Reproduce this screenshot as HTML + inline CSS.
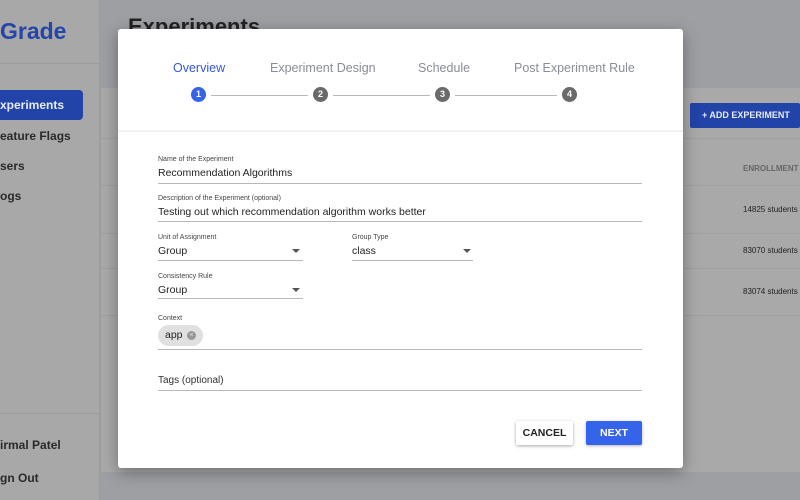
<!DOCTYPE html>
<html><head><style>
*{margin:0;padding:0;box-sizing:border-box}
body{width:800px;height:500px;overflow:hidden;background:#9e9fa3;font-family:"Liberation Sans",sans-serif;position:relative}
.abs{position:absolute}
.side{left:0;top:0;width:100px;height:500px;background:#a8a8a9;border-right:1px solid #9c9c9e}
.nav{font-size:12px;color:#2a2a2a;font-weight:bold;white-space:nowrap}
.card{left:101px;top:88px;width:699px;height:384px;background:#a9a9aa}
.modal{left:118px;top:29px;width:565px;height:439px;background:#fff;border-radius:3px;box-shadow:0 4px 16px rgba(0,0,0,.35)}
.lbl{font-size:7px;color:#444}
.val{font-size:10.5px;color:#222}
.line{height:1px;background:#b8b8b8}
.circ{width:15px;height:15px;border-radius:50%;background:#6a6a6a;color:#fff;font-size:9px;font-weight:bold;text-align:center;line-height:15px}
.step{font-size:12.5px;color:#8a8d99}
.arrow{width:0;height:0;border-left:4px solid transparent;border-right:4px solid transparent;border-top:4px solid #555}
</style></head><body>
<div class="abs side">
 <div class="abs" style="left:0;top:18px;font-size:23px;font-weight:bold;color:#2346a8">Grade</div>
 <div class="abs" style="left:0;top:63px;width:100px;height:1px;background:#9c9c9e"></div>
 <div class="abs" style="left:-10px;top:90px;width:93px;height:30px;background:#2244a8;border-radius:4px"></div>
 <div class="abs nav" style="left:0;top:98px;color:#e8ecff">xperiments</div>
 <div class="abs nav" style="left:0;top:129px">eature Flags</div>
 <div class="abs nav" style="left:0;top:159px">sers</div>
 <div class="abs nav" style="left:0;top:189px">ogs</div>
 <div class="abs" style="left:0;top:413px;width:100px;height:1px;background:#9c9c9e"></div>
 <div class="abs nav" style="left:0;top:438px">irmal Patel</div>
 <div class="abs nav" style="left:0;top:471px">gn Out</div>
</div>
<div class="abs" style="left:128px;top:14px;font-size:22px;font-weight:bold;color:#222">Experiments</div>
<div class="abs card">
 <div class="abs" style="left:589px;top:15px;width:110px;height:25px;background:#2244a8;border-radius:2px;color:#e8ecff;font-size:9px;font-weight:bold;line-height:25px;padding-left:12px">+ ADD EXPERIMENT</div>
 <div class="abs" style="left:0;top:50px;width:699px;height:1px;background:#a0a0a0"></div>
 <div class="abs" style="left:642px;top:76px;font-size:8px;color:#666;font-weight:bold">ENROLLMENT</div>
 <div class="abs" style="left:0;top:97px;width:699px;height:1px;background:#a0a0a0"></div>
 <div class="abs" style="left:642px;top:117px;font-size:8px;color:#222">14825 students</div>
 <div class="abs" style="left:0;top:145px;width:699px;height:1px;background:#a0a0a0"></div>
 <div class="abs" style="left:642px;top:158px;font-size:8px;color:#222">83070 students</div>
 <div class="abs" style="left:0;top:180px;width:699px;height:1px;background:#a0a0a0"></div>
 <div class="abs" style="left:642px;top:199px;font-size:8px;color:#222">83074 students</div>
 <div class="abs" style="left:0;top:227px;width:699px;height:1px;background:#a0a0a0"></div>
</div>
<div class="abs modal">
 <div class="abs step" style="left:55px;top:32px;color:#3858d6">Overview</div>
 <div class="abs step" style="left:152px;top:32px">Experiment Design</div>
 <div class="abs step" style="left:300px;top:32px">Schedule</div>
 <div class="abs step" style="left:396px;top:32px">Post Experiment Rule</div>
 <div class="abs circ" style="left:73px;top:58px;background:#3563e9">1</div>
 <div class="abs line" style="left:93px;top:66px;width:97px"></div>
 <div class="abs circ" style="left:195px;top:58px">2</div>
 <div class="abs line" style="left:215px;top:66px;width:97px"></div>
 <div class="abs circ" style="left:317px;top:58px">3</div>
 <div class="abs line" style="left:337px;top:66px;width:102px"></div>
 <div class="abs circ" style="left:444px;top:58px">4</div>
 <div class="abs" style="left:0;top:101px;width:565px;height:2px;background:#f1f1f1"></div>

 <div class="abs lbl" style="left:40px;top:127px">Name of the Experiment</div>
 <div class="abs val" style="left:40px;top:138px">Recommendation Algorithms</div>
 <div class="abs line" style="left:40px;top:154px;width:484px"></div>
 <div class="abs lbl" style="left:40px;top:166px">Description of the Experiment (optional)</div>
 <div class="abs val" style="left:40px;top:177px">Testing out which recommendation algorithm works better</div>
 <div class="abs line" style="left:40px;top:192px;width:484px"></div>

 <div class="abs lbl" style="left:40px;top:205px">Unit of Assignment</div>
 <div class="abs val" style="left:40px;top:216px">Group</div>
 <div class="abs arrow" style="left:174px;top:220px"></div>
 <div class="abs line" style="left:40px;top:231px;width:145px"></div>
 <div class="abs lbl" style="left:234px;top:205px">Group Type</div>
 <div class="abs val" style="left:234px;top:216px">class</div>
 <div class="abs arrow" style="left:345px;top:220px"></div>
 <div class="abs line" style="left:234px;top:231px;width:121px"></div>

 <div class="abs lbl" style="left:40px;top:244px">Consistency Rule</div>
 <div class="abs val" style="left:40px;top:255px">Group</div>
 <div class="abs arrow" style="left:174px;top:259px"></div>
 <div class="abs line" style="left:40px;top:269px;width:145px"></div>

 <div class="abs lbl" style="left:40px;top:286px">Context</div>
 <div class="abs" style="left:40px;top:296px;width:45px;height:21px;border-radius:11px;background:#e0e0e0;font-size:10.5px;color:#222;line-height:21px;padding-left:7px">app<span style="position:absolute;left:29px;top:6px;width:9px;height:9px;border-radius:50%;background:#999;color:#e0e0e0;font-size:7px;line-height:9px;text-align:center">×</span></div>
 <div class="abs line" style="left:40px;top:320px;width:484px"></div>

 <div class="abs val" style="left:40px;top:346px;font-size:10px;color:#333">Tags (optional)</div>
 <div class="abs line" style="left:40px;top:361px;width:484px"></div>

 <div class="abs" style="left:398px;top:392px;width:57px;height:24px;background:#fff;border-radius:2px;box-shadow:0 1px 3px rgba(0,0,0,.35);font-size:10.5px;font-weight:bold;color:#222;text-align:center;line-height:24px">CANCEL</div>
 <div class="abs" style="left:468px;top:392px;width:56px;height:24px;background:#3563e9;border-radius:2px;box-shadow:0 1px 3px rgba(0,0,0,.3);font-size:10.5px;font-weight:bold;color:#fff;text-align:center;line-height:24px">NEXT</div>
</div>
</body></html>
